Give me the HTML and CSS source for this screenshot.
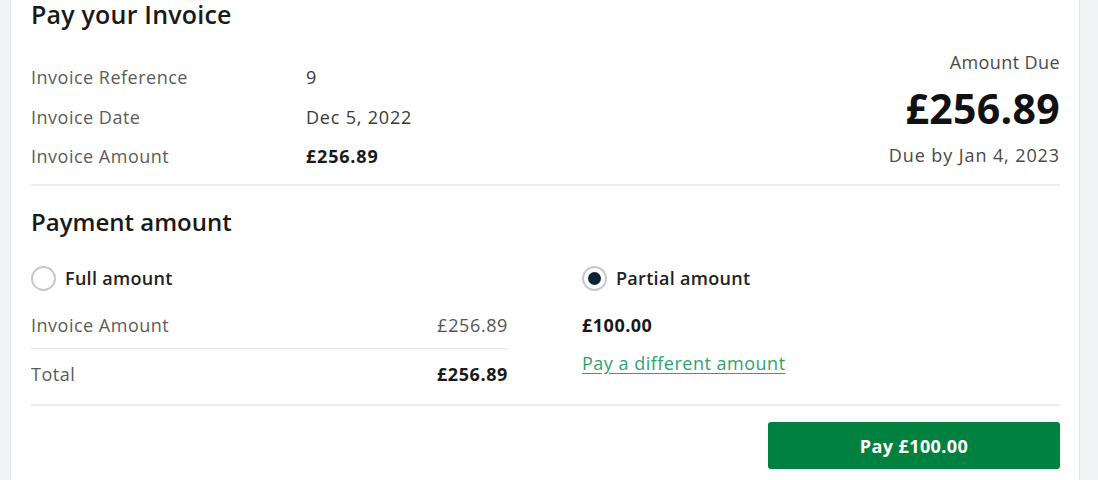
FILE: index.html
```html
<!DOCTYPE html>
<html lang="en">
<head>
<meta charset="utf-8">
<title>Pay your Invoice</title>
<link rel="stylesheet" href="styles.css">
</head>
<body>
<div class="page">
  <div class="card">
    <h1 class="title">Pay your Invoice</h1>
    <div class="summary">
      <div class="details">
        <div class="row"><span class="label">Invoice Reference</span><span class="value">9</span></div>
        <div class="row"><span class="label">Invoice Date</span><span class="value">Dec 5, 2022</span></div>
        <div class="row"><span class="label">Invoice Amount</span><span class="value strong">£256.89</span></div>
      </div>
      <div class="due">
        <div class="due-label">Amount Due</div>
        <div class="due-amount">£256.89</div>
        <div class="due-date">Due by Jan 4, 2023</div>
      </div>
    </div>
    <hr class="divider top-divider">
    <h2 class="subtitle">Payment amount</h2>
    <div class="options">
      <div class="option">
        <label class="radio"><span class="dot"></span><span class="radio-label">Full amount</span></label>
        <div class="line first"><span class="label">Invoice Amount</span><span class="num">£256.89</span></div>
        <hr class="divider small">
        <div class="line"><span class="label">Total</span><span class="num strong">£256.89</span></div>
      </div>
      <div class="option">
        <label class="radio"><span class="dot checked"></span><span class="radio-label">Partial amount</span></label>
        <div class="partial">£100.00</div>
        <a class="link" href="#">Pay a different amount</a>
      </div>
    </div>
    <hr class="divider bottom-divider">
    <div class="actions">
      <button class="pay">Pay £100.00</button>
    </div>
  </div>
</div>
</body>
</html>
```
FILE: styles.css
```css
* { box-sizing: border-box; }
html, body { margin: 0; padding: 0; }
body {
  background: #f2f4f6;
  font-family: "Open Sans", "Liberation Sans", sans-serif;
  color: #1a1a1a;
  width: 1098px;
  height: 480px;
  overflow: hidden;
}
.page {
  padding: 0 18px 0 10px;
  height: 480px;
}
.card {
  background: #fff;
  border-left: 1px solid #e3e6e9;
  border-right: 1px solid #e3e6e9;
  padding: 0 19px 0 20px;
  height: 480px;
}
.title {
  margin: 0;
  font-size: 25px;
  font-weight: 600;
  line-height: 28px;
  color: #191919;
  letter-spacing: 0.2px;
}
.summary {
  display: flex;
  justify-content: space-between;
  margin-top: 22px;
}
.details {
  display: flex;
  flex-direction: column;
  padding-top: 7px;
}
.row {
  display: flex;
  height: 40px;
  align-items: center;
}
.row:last-child { height: 38px; }
.label {
  color: #5c5c5c;
  font-size: 18px;
  letter-spacing: 0.5px;
}
.row .label { width: 275px; }
.value {
  color: #3a3a3a;
  font-size: 18px;
  letter-spacing: 0.8px;
}
.strong { font-weight: 700; color: #1a1a1a; }
.due {
  text-align: right;
}
.due-label {
  font-size: 18px;
  color: #4a4a4a;
  line-height: 24px;
  letter-spacing: 0.4px;
}
.due-amount {
  font-size: 41px;
  font-weight: 700;
  line-height: 50px;
  color: #111;
  margin-top: 9px;
  letter-spacing: 0.3px;
}
.due-date {
  font-size: 18px;
  color: #4a4a4a;
  line-height: 24px;
  margin-top: 10px;
  letter-spacing: 0.9px;
}
.divider {
  border: 0;
  border-top: 2px solid #ededed;
  margin: 0;
}
.top-divider { margin-top: 9px; }
.subtitle {
  margin: 20px 0 0;
  font-size: 24px;
  font-weight: 600;
  line-height: 32px;
  color: #191919;
}
.options {
  display: grid;
  grid-template-columns: 477px 478px;
  column-gap: 74px;
  margin-top: 25px;
}
.radio {
  display: flex;
  align-items: center;
  gap: 9px;
  height: 30px;
}
.dot {
  width: 25px;
  height: 25px;
  border: 2px solid #c8c8c8;
  border-radius: 50%;
  display: inline-flex;
  align-items: center;
  justify-content: center;
}
.dot.checked::after {
  content: "";
  width: 13px;
  height: 13px;
  border-radius: 50%;
  background: #0c2236;
}
.radio-label {
  font-size: 18px;
  font-weight: 600;
  color: #222;
  letter-spacing: 0.3px;
}
.line {
  display: flex;
  justify-content: space-between;
  align-items: center;
  height: 38px;
}
.line.first { margin-top: 13px; }
.num {
  font-size: 18px;
  color: #555;
  letter-spacing: 0.6px;
}
.num.strong { color: #1a1a1a; }
.divider.small {
  margin: 4px 0 6px;
  border-top-width: 1.5px;
  border-color: #e6e6e6;
}
.partial {
  margin-top: 13px;
  height: 38px;
  display: flex;
  align-items: center;
  font-size: 18px;
  font-weight: 700;
  color: #1a1a1a;
  letter-spacing: 0.5px;
}
.link {
  display: inline-block;
  margin-top: 7px;
  font-size: 18px;
  color: #2ea46b;
  text-decoration: underline;
  text-underline-offset: 3px;
  letter-spacing: 0.5px;
  line-height: 24px;
}
.bottom-divider { margin-top: 11px; }
.actions {
  display: flex;
  justify-content: flex-end;
  margin-top: 16px;
}
.pay {
  width: 292px;
  height: 47px;
  background: #00813f;
  color: #fff;
  border: 0;
  border-radius: 3px;
  font-family: inherit;
  font-size: 18px;
  font-weight: 700;
  letter-spacing: 0.4px;
}
```
